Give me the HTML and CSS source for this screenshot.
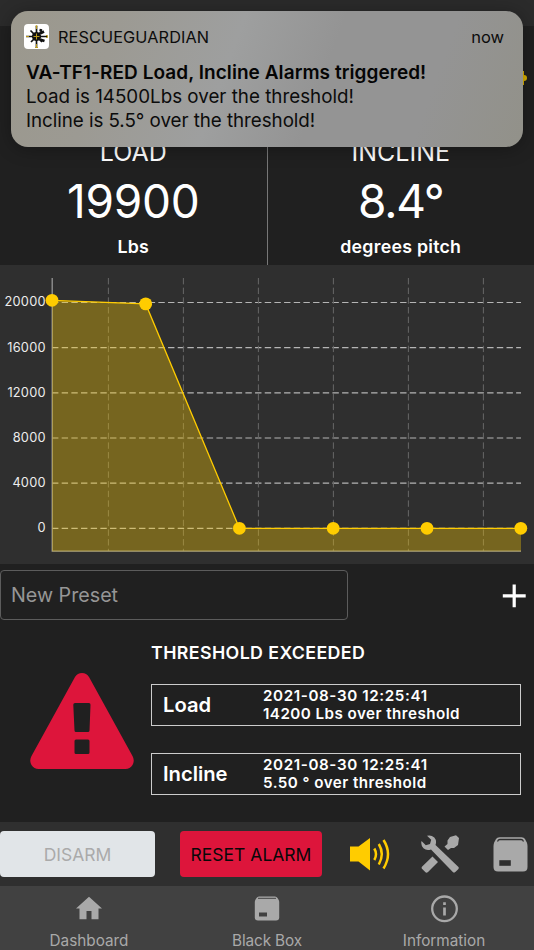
FILE: index.html
```html
<!DOCTYPE html>
<html lang="en">
<head>
    <meta charset="UTF-8">
    <meta name="viewport" content="width=device-width, initial-scale=1.0">
    <title>RescueGuardian</title>
    <link rel="stylesheet" href="styles.css">
</head>
<body>
    <div class="notification">
        <div class="notification-header">
            <svg class="app-icon" viewBox="0 0 25 25">
                <rect width="25" height="25" rx="4" fill="#fff"/>
                <g stroke="#111" fill="none">
                    <path d="M12.500 2V23M2 12.500H23M6.500 6.500L18 18M18 7L7 18" stroke-width="1.7"/>
                    <path d="M16 9.500L20 7.500M16 15.500L20.500 17M16.500 7.500L17 5" stroke-width="2.600"/>
                </g>
                <circle cx="12.500" cy="12.500" r="4.600" fill="#111"/>
                <path d="M12.500 1.500V5M12.500 20V23.500M11.500 2H13.500M11 23.500H14M9.500 12.500H15.500M12.500 9.500V15.500M2 12.500H5M22 11.500H23.500V13.500H22" stroke="#b9991a" stroke-width="1" fill="none"/>
            </svg>
            <span class="app-name">RESCUEGUARDIAN</span>
            <span class="time">now</span>
        </div>
        <h2>VA-TF1-RED Load, Incline Alarms triggered!</h2>
        <p>Load is 14500Lbs over the threshold!</p>
        <p class="incline-text">Incline is 5.5° over the threshold!</p>
    </div>

    <header class="top-bar"></header>

    <section class="readings">
        <div class="reading">
            <h3>LOAD</h3>
            <div class="value">19900</div>
            <div class="unit">Lbs</div>
        </div>
        <div class="reading">
            <h3>INCLINE</h3>
            <div class="value value-incline">8.4°</div>
            <div class="unit">degrees pitch</div>
        </div>
        <!-- battery icon, mostly under the banner -->
        <svg class="battery" width="14" height="14" viewBox="0 0 14 14">
            <path fill="#dcb200" d="M0 0H11V4Q14 4 14 7Q14 10 11 10V14H0Z"/>
        </svg>
    </section>

    <section class="chart">
        <svg width="534" height="299" viewBox="0 0 534 299">
            <g class="grid-x">
                <path d="M52 37.5H521M52 82.6H521M52 127.8H521M52 173H521M52 218.1H521M52 263.3H521"/>
            </g>
            <g class="grid-y">
                <path d="M108.4 13V286M183.4 13V286M258.4 13V286M333.4 13V286M408.4 13V286M483.4 13V286"/>
            </g>
            <path class="axis" d="M52.2 13V286.2H521"/>
            <path class="area" d="M52 35.3L145.7 38.9L239.4 263.3H521V286.5H52Z"/>
            <path class="line" d="M52 35.3L145.7 38.9L239.4 263.3H521"/>
            <g class="points">
                <circle cx="52" cy="35.3" r="6.4"/>
                <circle cx="145.7" cy="38.9" r="6.4"/>
                <circle cx="239.4" cy="263.3" r="6.4"/>
                <circle cx="333.2" cy="263.3" r="6.4"/>
                <circle cx="427" cy="263.3" r="6.4"/>
                <circle cx="520.8" cy="263.3" r="6.4"/>
            </g>
            <g class="labels">
                <text x="45.7" y="41">20000</text>
                <text x="45.7" y="86.6">16000</text>
                <text x="45.7" y="131.6">12000</text>
                <text x="45.7" y="176.6">8000</text>
                <text x="45.7" y="221.6">4000</text>
                <text x="45.7" y="266.8">0</text>
            </g>
        </svg>
    </section>

    <section class="preset">
        <div class="preset-input">New Preset</div>
        <svg class="plus" width="24" height="26" viewBox="0 0 24 26">
            <path d="M12.2 2.500V25.300M.8 13.900H23.7" stroke="#fff" stroke-width="3.2"/>
        </svg>
    </section>

    <section class="alarm">
        <svg class="warning" width="104" height="98" viewBox="0 0 104 98">
            <path fill="#dd153b" fill-rule="evenodd" d="M45 5Q47.500 1 52 1Q56.500 1 59 5L102.500 84Q105 88.500 102.500 93Q100 97 95.500 97H8.500Q4 97 1.500 93Q-1 88.500 1.500 84ZM45 31Q43.200 31 43.300 33L44.500 58.500Q44.600 60 46 60H58Q59.400 60 59.500 58.500L60.500 33Q60.600 31 59 31ZM46 67.500Q44.500 67.500 44.500 69V80.500Q44.500 82 46 82H58Q59.500 82 59.500 80.500V69Q59.500 67.500 58 67.500Z"/>
        </svg>
        <div class="alarm-list">
            <h4>THRESHOLD EXCEEDED</h4>
            <div class="alarm-item">
                <span class="name">Load</span>
                <div class="details">
                    <div class="date">2021-08-30 12:25:41</div>
                    <div>14200 Lbs over threshold</div>
                </div>
            </div>
            <div class="alarm-item">
                <span class="name">Incline</span>
                <div class="details">
                    <div class="date">2021-08-30 12:25:41</div>
                    <div>5.50 ° over threshold</div>
                </div>
            </div>
        </div>
    </section>

    <section class="actions">
        <button class="btn disarm" disabled>DISARM</button>
        <button class="btn reset">RESET ALARM</button>
        <svg class="sound" width="42" height="34" viewBox="0 0 42 34">
            <path fill="#ffcc00" d="M1 9.500H9.500L21 1V33.500L9.500 24.500H1Z"/>
            <path fill="none" stroke="#ffcc00" stroke-width="2.500" d="M25.300 11.500Q28.700 17.200 25.300 23M29.800 7Q35.800 17 29.800 27.500M34.500 3Q43.500 17 34.500 31.500"/>
        </svg>
        <svg class="tools" width="38" height="38" viewBox="0 0 38 38">
            <path fill="#a9a9a9" d="M6 .8Q10-.5 13.300 2.500Q16 5.500 14.500 10L37.200 31.800Q38.400 33 37.200 34.200L34.300 37Q33 38.200 31.800 37L10 14.500Q5.500 16 2.500 13.300Q-.5 10 .5 6L4.800 10.200L9 9L10.200 4.800Z"/>
            <path fill="#a9a9a9" d="M11.500 21.500L17 27L7 37Q5.500 38.300 4.200 37L1.200 34Q0 32.700 1.200 31.500ZM35 .3L38 3L37 10L33 13H30L27 15L23.500 11.500L26.500 9V5.500L29 2Z"/>
        </svg>
        <svg class="box" width="35" height="35" viewBox="0 0 35 35">
            <path fill="#a9a9a9" d="M6.500.3H28.500Q31 .3 32 2L33.800 5.500Q34.500 7 34.500 9V30Q34.500 34.500 30 34.500H5Q.5 34.500.5 30V9Q.5 7 1.200 5.500L3 2Q4 .3 6.500.3Z"/>
            <path d="M4.500 4.500L5.500 3Q6 2.500 7 2.500H28Q29 2.500 29.500 3L30.500 4.500" fill="none" stroke="#2f2f2f" stroke-width="1.300"/>
            <path d="M6.300 23.200H17.800V28.800H6.300Z" fill="#2f2f2f"/>
        </svg>
    </section>

    <nav class="tabs">
        <a class="tab">
            <svg width="26" height="26" viewBox="0 0 26 26">
                <path fill="#a9a9a9" d="M13 1.800L26 13.500H22.500V24.200H15.500V16H10.500V24.200H3.500V13.500H0Z"/>
            </svg>
            <span>Dashboard</span>
        </a>
        <a class="tab">
            <svg width="26" height="26" viewBox="0 0 26 26">
                <path fill="#a9a9a9" d="M5 1.500H21Q22.500 1.500 23.500 3L24.700 5Q25.200 6 25.200 7V22.500Q25.200 25.500 22 25.500H4Q.8 25.500.8 22.500V7Q.8 6 1.300 5L2.500 3Q3.500 1.500 5 1.500Z"/>
                <path d="M4 3.300H22" stroke="#414141"/>
                <path d="M5 17.500H13V21.500H5Z" fill="#414141"/>
            </svg>
            <span class="black-box">Black Box</span>
        </a>
        <a class="tab">
            <svg width="28" height="28" viewBox="0 0 28 28">
                <circle cx="13.500" cy="13.800" r="12.300" fill="none" stroke="#a9a9a9" stroke-width="2.300"/>
                <path d="M13.500 7.300V10M13.500 12.500V20.500" stroke="#a9a9a9" stroke-width="2.700"/>
            </svg>
            <span class="information">Information</span>
        </a>
    </nav>
</body>
</html>
```

FILE: styles.css
```css
* {
    margin: 0;
    padding: 0;
    box-sizing: border-box;
}

body {
    font-family: "Inter", sans-serif;
    width: 534px;
    height: 950px;
    background: #202020;
    color: #fff;
    overflow: hidden;
    display: flex;
    flex-direction: column;
}

svg {
    display: block;
    flex-shrink: 0;
}

/* Notification banner */
.notification {
    position: absolute;
    top: 11px;
    left: 11px;
    width: 512px;
    height: 136px;
    padding: 13px 19px 0 15px;
    border-radius: 17px;
    background: linear-gradient(110deg, #9b988d 0%, #9c9a93 20%, #9e9f9f 42%, #949494 60%, #949494 80%, #929189 100%);
    box-shadow: 0 2px 18px rgba(0, 0, 0, 0.3);
    color: #0c0c0c;
    z-index: 10;
}

.notification-header {
    display: flex;
    align-items: center;
    height: 25px;
    margin-left: -2px;
}

.app-icon {
    width: 25px;
    height: 25px;
}

.app-name {
    margin-left: 9px;
    font-size: 16.3px;
    letter-spacing: 0.1px;
}

.time {
    margin-left: auto;
    font-size: 16.5px;
}

.notification h2 {
    margin-top: 12px;
    font-size: 19px;
    line-height: 24px;
    font-weight: 600;
    letter-spacing: 0.06px;
    color: #050505;
    white-space: nowrap;
}

.notification p {
    font-size: 18.8px;
    line-height: 23.5px;
    white-space: nowrap;
}

.notification .incline-text {
    letter-spacing: -0.05px;
}

/* Readings */
.top-bar {
    height: 26px;
    background: #2b2b2b;
}

.readings {
    position: relative;
    display: flex;
    height: 239px;
}

.reading {
    flex: 1;
    padding-top: 111px;
    text-align: center;
}

.reading:first-child {
    border-right: 1px solid #777;
}

.reading h3 {
    font-size: 25px;
    line-height: 30px;
    font-weight: 400;
}

.value {
    margin-top: 6px;
    font-size: 46px;
    line-height: 56px;
    letter-spacing: -0.3px;
}

.value-incline {
    letter-spacing: -1.2px;
}

.unit {
    margin-top: 8px;
    font-size: 17.8px;
    line-height: 20px;
    font-weight: 600;
    letter-spacing: 0.25px;
}

.battery {
    position: absolute;
    top: 45px;
    right: 7px;
}

/* Chart */
.chart {
    height: 299px;
    background: #2f2f2f;
}

.grid-x {
    fill: none;
    stroke: #b5b5b5;
    stroke-width: 1.2;
    stroke-dasharray: 6.4 3.27;
}

.grid-y {
    fill: none;
    stroke: #666;
    stroke-width: 1;
    stroke-dasharray: 6.4 3.27;
}

.axis {
    fill: none;
    stroke: #969696;
    stroke-width: 1.3;
}

.area {
    fill: rgba(255, 204, 0, 0.34);
}

.line {
    fill: none;
    stroke: #ffcc00;
    stroke-width: 1.3;
}

.points {
    fill: #ffcc00;
}

.labels {
    font-size: 12.8px;
    letter-spacing: 0.2px;
    fill: #ececec;
    text-anchor: end;
}

/* Preset */
.preset {
    display: flex;
    align-items: center;
    justify-content: space-between;
    height: 62px;
    padding-right: 8px;
}

.preset-input {
    width: 348px;
    height: 50px;
    padding-left: 10px;
    border: 1px solid #5c5c5c;
    border-radius: 4px;
    font-size: 19.7px;
    line-height: 49px;
    color: #969696;
}

/* Alarm */
.alarm {
    display: flex;
    height: 196px;
    padding: 16px 13px 0 30px;
}

.warning {
    margin-top: 30px;
}

.alarm-list {
    flex: 1;
    margin-left: 17px;
}

.alarm h4 {
    font-size: 17.8px;
    line-height: 22px;
    font-weight: 600;
    letter-spacing: 0.4px;
}

.alarm-item {
    display: flex;
    align-items: center;
    height: 42px;
    margin-top: 20px;
    padding-left: 11px;
    border: 1px solid #ccc;
    font-weight: 600;
}

.alarm-item + .alarm-item {
    margin-top: 27px;
}

.name {
    width: 100px;
    padding-bottom: 2px;
    font-size: 20.2px;
}

.details {
    font-size: 15.2px;
    line-height: 18.5px;
    letter-spacing: 0.45px;
    white-space: nowrap;
}

.date {
    letter-spacing: 0.6px;
}

/* Buttons */
.actions {
    display: flex;
    align-items: center;
    height: 64px;
    background: #2f2f2f;
}

.btn {
    height: 46px;
    border: none;
    border-radius: 4px;
    font-family: inherit;
    font-size: 17.5px;
    white-space: nowrap;
}

.disarm {
    width: 155px;
    background: #e1e5e8;
    color: #aaa;
}

.reset {
    width: 142px;
    margin-left: 25px;
    background: #dd153b;
    color: #080808;
}

.sound {
    margin-left: 27px;
}

.tools {
    margin-left: 30px;
}

.box {
    margin-left: 34px;
}

/* Bottom tabs */
.tabs {
    display: flex;
    height: 64px;
    background: #414141;
}

.tab {
    flex: 1;
    display: flex;
    flex-direction: column;
    align-items: center;
    justify-content: space-between;
    padding-top: 9px;
    font-size: 15.3px;
    line-height: 19px;
    color: #a9a9a9;
}

.black-box {
    letter-spacing: -0.1px;
}

.information {
    padding-right: 2px;
}
```
